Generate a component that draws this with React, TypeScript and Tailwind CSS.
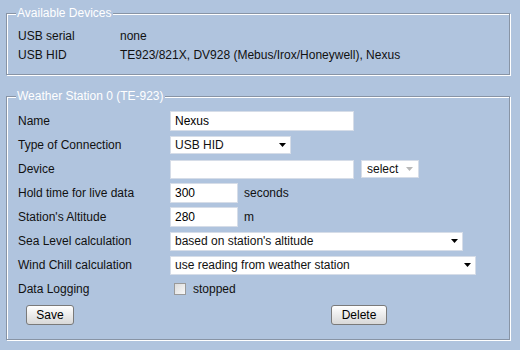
import React from 'react'

const font = { fontFamily: '"Liberation Sans", Arial, sans-serif' }

function Arrow({ light }: { light?: boolean }) {
    return (
        <svg width="7" height="4" viewBox="0 0 7 4" className="shrink-0">
            <polygon points="0,0 7,0 3.5,4" fill={light ? '#b8b8b8' : '#000'} />
        </svg>
    )
}

function Row({ label, children }: { label: string; children?: React.ReactNode }) {
    return (
        <div className="flex items-center h-[24px]">
            <div className="w-[152px] shrink-0">{label}</div>
            {children}
        </div>
    )
}

function TextBox({ value, w, h }: { value: string; w: string; h: string }) {
    return (
        <div className={`${w} ${h} bg-white border border-[#d6dde8] flex items-center pl-[4px] text-black`}>
            {value}
        </div>
    )
}

function Dropdown({ value, w, h }: { value: string; w: string; h: string }) {
    return (
        <div className={`${w} ${h} bg-white border border-[#d6dde8] flex items-center justify-between pl-[4px] pr-[4px]`}>
            <span>{value}</span>
            <Arrow />
        </div>
    )
}

const fieldset = 'border border-[#8894a5] shadow-[inset_1px_1px_0_#fff,1px_1px_0_#fff] w-[504px] pl-[11px] pr-[8px]'
const legend = '-ml-[2px] px-[1px] text-white leading-[14px] bg-[#b0c4de]'
const btn = 'h-[20px] border border-[#7a7a7a] rounded-[3px] bg-gradient-to-b from-white to-[#d8d8d8] flex items-center justify-center text-black'

export default function App() {
    return (
        <div className="w-[520px] h-[350px] bg-[#b0c4de] px-[6px] pt-[6px] text-[12px] text-[#111] overflow-hidden" style={font}>
            {/* Available devices */}
            <fieldset className={`${fieldset} pt-[6px] pb-[10px]`}>
                <legend className={legend}>Available Devices</legend>
                <div className="flex items-center h-[19px]">
                    <div className="w-[102px]">USB serial</div>
                    <div>none</div>
                </div>
                <div className="flex items-center h-[19px]">
                    <div className="w-[102px]">USB HID</div>
                    <div>TE923/821X, DV928 (Mebus/Irox/Honeywell), Nexus</div>
                </div>
            </fieldset>

            {/* Station settings */}
            <fieldset className={`${fieldset} mt-[14px] pt-[6px] pb-[12px]`}>
                <legend className={legend}>Weather Station 0 (TE-923)</legend>
                <Row label="Name">
                    <TextBox value="Nexus" w="w-[184px]" h="h-[20px]" />
                </Row>
                <Row label="Type of Connection">
                    <Dropdown value="USB HID" w="w-[121px]" h="h-[18px]" />
                </Row>
                <Row label="Device">
                    <TextBox value="" w="w-[184px]" h="h-[19px]" />
                    <div className="ml-[7px] w-[58px] h-[18px] bg-white border border-[#d6dde8] flex items-center justify-between pl-[5px] pr-[5px]">
                        <span>select</span>
                        <Arrow light />
                    </div>
                </Row>
                <Row label="Hold time for live data">
                    <TextBox value="300" w="w-[68px]" h="h-[20px]" />
                    <span className="ml-[6px]">seconds</span>
                </Row>
                <Row label="Station's Altitude">
                    <TextBox value="280" w="w-[68px]" h="h-[20px]" />
                    <span className="ml-[6px]">m</span>
                </Row>
                <Row label="Sea Level calculation">
                    <Dropdown value="based on station's altitude" w="w-[293px]" h="h-[19px]" />
                </Row>
                <Row label="Wind Chill calculation">
                    <Dropdown value="use reading from weather station" w="w-[306px]" h="h-[19px]" />
                </Row>
                <Row label="Data Logging">
                    <div className="ml-[4px] w-[12px] h-[12px] border border-[#9a9a9a] bg-gradient-to-br from-[#dcdcdc] to-[#f8f8f8]" />
                    <span className="ml-[7px]">stopped</span>
                </Row>
                <div className="flex items-center h-[24px] mt-[2px]">
                    <div className={`${btn} ml-[8px] w-[48px]`}>Save</div>
                    <div className={`${btn} ml-[257px] w-[56px]`}>Delete</div>
                </div>
            </fieldset>
        </div>
    )
}
